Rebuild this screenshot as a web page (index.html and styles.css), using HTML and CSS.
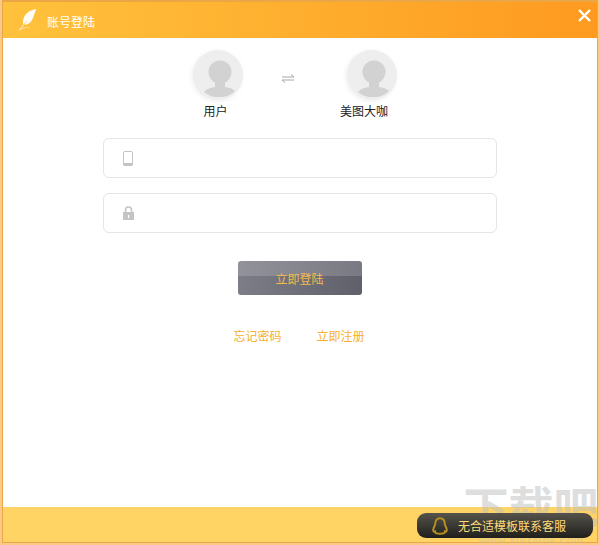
FILE: index.html
```html
<!DOCTYPE html>
<html lang="zh">
<head>
<meta charset="utf-8">
<title>账号登陆</title>
<link rel="stylesheet" href="styles.css">
</head>
<body>
<div class="window">
  <div class="frame">
    <header class="titlebar">
      <svg class="feather" width="19" height="23" viewBox="0 0 24 26" preserveAspectRatio="none"><path d="M23 1C15 2 9 6 7 12c-1 3-1 5 0 7 1-1 2-3 4-5-1 2-2 4-3 5 5 0 9-3 11-8 1-3 3-7 4-10z" fill="#fff" opacity=".95"/><path d="M7 19c-1 2-3 4-5 5" stroke="#fff" fill="none"/><path d="M1 25c4-3 9-4 15-3-5 0-10 1-15 4z" fill="#fff" opacity=".6"/></svg>
      <span class="title">账号登陆</span>
      <svg class="close" width="13" height="13" viewBox="0 0 13 13"><path d="M1 1l11 11M12 1L1 12" stroke="#fff" stroke-width="2.4" fill="none"/></svg>
    </header>
    <main class="content">
      <div class="roles">
        <div class="role role-user">
          <svg class="avatar" width="52" height="52" viewBox="0 0 52 52"><defs><clipPath id="clip-a"><circle cx="27" cy="24" r="23.500"/></clipPath></defs><circle cx="26" cy="25" r="25" fill="#eeeeee"/><g clip-path="url(#clip-a)"><circle cx="28" cy="22" r="11.500" fill="#d2d2d2"/><path d="M23 30h10v7c7 1 11 3 14 10H9c3-7 7-9 14-10z" fill="#d2d2d2"/></g></svg>
          <span class="role-name">用户</span>
        </div>
        <svg class="swap" width="12" height="9" viewBox="0 0 12 9"><path d="M0 3h12L9 .5M12 6H0l3 2.500" stroke="#a8a8a8" stroke-width="1" fill="none"/></svg>
        <div class="role role-pro">
          <svg class="avatar" width="52" height="52" viewBox="0 0 52 52"><defs><clipPath id="clip-b"><circle cx="27" cy="24" r="23.500"/></clipPath></defs><circle cx="26" cy="25" r="25" fill="#eeeeee"/><g clip-path="url(#clip-b)"><circle cx="28" cy="22" r="11.500" fill="#d2d2d2"/><path d="M23 30h10v7c7 1 11 3 14 10H9c3-7 7-9 14-10z" fill="#d2d2d2"/></g></svg>
          <span class="role-name">美图大咖</span>
        </div>
      </div>
      <div class="field">
        <svg width="10" height="15" viewBox="0 0 10 15"><rect x=".5" y=".5" width="9" height="14" rx="1" fill="none" stroke="#c4c4c4"/><rect x=".5" y="12" width="9" height="2.500" fill="#c4c4c4"/></svg>
      </div>
      <div class="field field-lock">
        <svg width="11" height="14" viewBox="0 0 11 14"><path d="M2.500 6V4a3 3 0 0 1 6 0v2" fill="none" stroke="#c4c4c4" stroke-width="1.600"/><path d="M0 6h11v8H0z" fill="#c4c4c4"/><rect x="5" y="9" width="1.200" height="3" fill="#fff"/></svg>
      </div>
      <button class="login" type="button">立即登陆</button>
      <nav class="links">
        <a class="link">忘记密码</a>
        <a class="link">立即注册</a>
      </nav>
    </main>
    <footer class="footer">
      <div class="service">
        <svg width="16" height="18" viewBox="0 0 16 18"><path d="M8 1.200c3.200 0 4.800 2.500 4.800 5.800 0 1.500 2 3.500 2 6 0 1.500-.8 2-1.800 1.500 0 1.500-2.500 2.300-5 2.300s-5-.8-5-2.300c-1 .5-1.800 0-1.800-1.500 0-2.500 2-4.500 2-6C3.200 3.700 4.800 1.200 8 1.200z" fill="none" stroke="#b5901f" stroke-width="2"/></svg>
        <span>无合适模板联系客服</span>
      </div>
    </footer>
  </div>
  <div class="watermark">
    <span class="wm-name">下载吧</span>
    <span class="wm-url">www.xiazaiba.com</span>
  </div>
</div>
</body>
</html>
```

FILE: styles.css
```css
* { box-sizing: border-box; }
html, body { margin: 0; padding: 0; }
body {
  width: 600px;
  height: 545px;
  font-family: "Liberation Sans", "Noto Sans CJK SC", sans-serif;
  font-size: 12px;
  overflow: hidden;
  background: #fff;
}
.window {
  position: relative;
  width: 600px;
  height: 545px;
  border: solid #fdc987;
  border-width: 0 2px 2px;
  overflow: hidden;
}
.frame {
  height: 100%;
  display: flex;
  flex-direction: column;
  border: solid #eba648;
  border-width: 2px 1px 1px;
}
.titlebar {
  height: 36px;
  flex: none;
  display: flex;
  align-items: center;
  padding: 0 6px 0 15px;
  background: linear-gradient(to right, #ffc23c, #fe9a20);
  color: #fff;
}
.feather { flex: none; margin-top: -2px; }
.title { margin-left: 10px; font-size: 12px; margin-top: 2px; }
.close { margin-left: auto; margin-top: -9px; }
.content {
  flex: 1;
  display: flex;
  flex-direction: column;
  align-items: center;
  background: #fff;
}
.roles {
  display: flex;
  align-items: flex-start;
  margin: 12px 0 0 -10px;
  height: 71px;
}
.role {
  width: 52px;
  display: flex;
  flex-direction: column;
  align-items: center;
}
.avatar {
  flex: none;
  filter: drop-shadow(-1px 1px 2px rgba(0,0,0,.07));
}
.role-name {
  margin-top: 2px;
  white-space: nowrap;
  color: #222;
  font-size: 12px;
  line-height: 17px;
}
.role-user .role-name { margin-right: 5px; }
.role-pro .role-name { margin-right: 16px; }
.swap { margin: 24px 52px 0 38px; flex: none; }
.field {
  width: 394px;
  height: 40px;
  border: 1px solid #e5e5e5;
  border-radius: 6px;
  display: flex;
  align-items: center;
  padding-left: 19px;
  margin-top: 17px;
}
.field svg { flex: none; }
.field-lock { margin-top: 15px; }
.login {
  margin-top: 28px;
  width: 124px;
  height: 34px;
  border: 0;
  border-radius: 3px;
  padding: 0 1px 0 0;
  background:
    linear-gradient(to bottom, rgba(255,255,255,.16) 0 15px, transparent 15px),
    linear-gradient(to right, #7d7d87, #5f606a);
  color: #f4bb4e;
  font: inherit;
}
.links {
  display: flex;
  gap: 35px;
  margin: 33px 2px 0 0;
}
.link { color: #f6b02c; line-height: 18px; }
.footer {
  height: 35px;
  flex: none;
  display: flex;
  align-items: center;
  justify-content: flex-end;
  padding-right: 4px;
  background: #ffd465;
}
.service {
  position: relative;
  z-index: 1;
  width: 176px;
  height: 25px;
  border-radius: 9px;
  display: flex;
  align-items: center;
  padding-left: 15px;
  gap: 10px;
  margin-top: 2px;
  background: linear-gradient(to bottom, #55534a, #201f1c);
  color: #ffdb78;
}
.service svg { flex: none; }
.watermark {
  position: absolute;
  right: 0;
  bottom: -2px;
  width: 134px;
  display: flex;
  flex-direction: column;
  align-items: center;
  pointer-events: none;
}
.wm-name {
  font-size: 45px;
  line-height: 50px;
  font-weight: 700;
  color: rgba(190,190,190,.5);
  white-space: nowrap;
}
.wm-url {
  font-size: 11px;
  line-height: 10px;
  font-weight: 700;
  letter-spacing: .5px;
  color: rgba(190,190,190,.4);
}
```
